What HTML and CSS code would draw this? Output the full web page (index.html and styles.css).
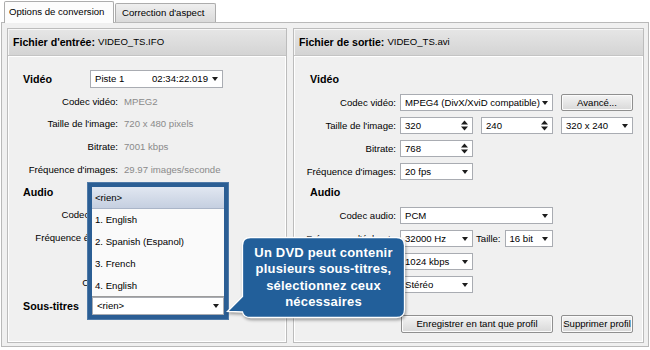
FILE: index.html
```html
<!doctype html>
<html lang="fr">
<head>
    <meta charset="UTF-8">
    <title>Options de conversion</title>
    <link rel="stylesheet" href="styles.css">
</head>
<body>
<div class="tabs">
    <div class="tab active">Options de conversion</div>
    <div class="tab">Correction d'aspect</div>
</div>
<div class="page">
    <div class="panel panel-in">
        <div class="panel-head"><b>Fichier d'entrée:</b> VIDEO_TS.IFO</div>
        <div class="panel-body in-body">
            <div class="srow">
                <span class="sec">Vidéo</span>
                <div class="combo piste w133"><span>Piste 1</span><span class="time">02:34:22.019</span></div>
            </div>
            <div class="irow"><span class="lbl">Codec vidéo:</span><span class="val">MPEG2</span></div>
            <div class="irow"><span class="lbl">Taille de l'image:</span><span class="val">720 x 480 pixels</span></div>
            <div class="irow"><span class="lbl">Bitrate:</span><span class="val">7001 kbps</span></div>
            <div class="irow"><span class="lbl">Fréquence d'images:</span><span class="val">29.97 images/seconde</span></div>
            <div class="irow"><span class="sec">Audio</span></div>
            <div class="irow"><span class="lbl">Codec audio:</span></div>
            <div class="irow"><span class="lbl">Fréquence échant.:</span></div>
            <div class="irow"><span class="lbl">Bitrate:</span></div>
            <div class="irow"><span class="lbl">Canaux:</span></div>
            <div class="srow sub">
                <span class="sec">Sous-titres</span>
                <div class="drop">
                    <div class="combo w132">&lt;rien&gt;</div>
                    <div class="popup">
                        <ul class="list">
                            <li class="sel">&lt;rien&gt;</li>
                            <li>1. English</li>
                            <li>2. Spanish (Espanol)</li>
                            <li>3. French</li>
                            <li>4. English</li>
                        </ul>
                    </div>
                </div>
            </div>
        </div>
    </div>

    <div class="panel panel-out">
        <div class="panel-head"><b>Fichier de sortie:</b> VIDEO_TS.avi</div>
        <div class="panel-body out-body">
            <div class="osec">Vidéo</div>
            <div class="orow first">
                <span class="lbl">Codec vidéo:</span>
                <div class="combo w153">MPEG4 (DivX/XviD compatible)</div>
                <div class="btn w72 ml8">Avancé...</div>
            </div>
            <div class="orow">
                <span class="lbl">Taille de l'image:</span>
                <div class="combo spin w73">320<svg width="7" height="11" viewBox="0 0 7 11"><path d="M0 4.5L3.5 0.5 7 4.5z M0 6.5L3.5 10.5 7 6.5z"/></svg></div>
                <div class="combo spin w72 ml8">240<svg width="7" height="11" viewBox="0 0 7 11"><path d="M0 4.5L3.5 0.5 7 4.5z M0 6.5L3.5 10.5 7 6.5z"/></svg></div>
                <div class="combo w72 ml8">320 x 240</div>
            </div>
            <div class="orow">
                <span class="lbl">Bitrate:</span>
                <div class="combo spin w73">768<svg width="7" height="11" viewBox="0 0 7 11"><path d="M0 4.5L3.5 0.5 7 4.5z M0 6.5L3.5 10.5 7 6.5z"/></svg></div>
            </div>
            <div class="orow">
                <span class="lbl">Fréquence d'images:</span>
                <div class="combo w73">20 fps</div>
            </div>
            <div class="osec audio">Audio</div>
            <div class="orow">
                <span class="lbl">Codec audio:</span>
                <div class="combo w153">PCM</div>
            </div>
            <div class="orow">
                <span class="lbl">Fréquence d'échant.:</span>
                <div class="combo w73">32000 Hz</div>
                <span class="small-lbl">Taille:</span>
                <div class="combo w48">16 bit</div>
            </div>
            <div class="orow">
                <span class="lbl"></span>
                <div class="combo w73">1024 kbps</div>
            </div>
            <div class="orow">
                <span class="lbl"></span>
                <div class="combo w73">Stéréo</div>
            </div>
            <div class="brow">
                <div class="btn w152">Enregistrer en tant que profil</div>
                <div class="btn w72 ml8">Supprimer profil</div>
            </div>
        </div>
    </div>
</div>

<div class="callout">
    <svg class="bubble" width="182" height="86" viewBox="0 0 182 86">
        <path d="M24.5 2.5H170.5Q178.5 2.5 178.5 10.5V74.5Q178.5 82.5 170.5 82.5H25Q17.5 82.5 16.5 77L1.5 76.5 16.5 61.5V10.5Q16.5 2.5 24.5 2.5Z"/>
    </svg>
    <div class="callout-text">Un DVD peut contenir<br>plusieurs sous-titres,<br>sélectionnez ceux<br>nécessaires</div>
</div>
</body>
</html>
```

FILE: styles.css
```css
* {
    margin: 0;
    padding: 0;
    box-sizing: border-box;
}

ul {
    list-style: none;
}

body {
    position: relative;
    width: 650px;
    height: 350px;
    overflow: hidden;
    background: #fff;
    font: 9.6px/1.2 "Liberation Sans", Arial, sans-serif;
    color: #000;
}

b {
    font-size: 10.6px;
}

/* tabs */

.tabs {
    display: flex;
    align-items: flex-end;
    height: 22px;
    padding-left: 4px;
}

.tab {
    width: 101px;
    height: 19px;
    margin-left: 1px;
    padding-left: 6px;
    display: flex;
    align-items: center;
    border: 1px solid #acacac;
    border-bottom: none;
    border-radius: 2px 2px 0 0;
    background: linear-gradient(#efefef, #dadada);
}

.tab.active {
    width: 110px;
    height: 22px;
    margin-left: 0;
    margin-bottom: -1px;
    padding-left: 4px;
    padding-bottom: 2px;
    position: relative;
    z-index: 1;
    background: #fcfcfc;
}

.page {
    width: 648px;
    height: 325px;
    margin-left: 1px;
    padding: 5px 0 0 5px;
    display: flex;
    gap: 6px;
    border: 1px solid #b9b9b9;
    background: #f0f0f0;
}

/* panels */

.panel {
    height: 315px;
    display: flex;
    flex-direction: column;
    border: 1px solid #bcbcbc;
    background: #f0f0f0;
    box-shadow: inset 0 0 0 1px #fff;
}

.panel-in {
    width: 280px;
}

.panel-out {
    width: 351px;
}

.panel-head {
    height: 27px;
    padding-left: 5px;
    display: flex;
    align-items: center;
    gap: 3px;
    border-bottom: 1px solid #c4c4c4;
    background: linear-gradient(#e6e6e6, #d4d4d4);
    box-shadow: inset 1px 1px 0 #f7f7f7;
}

.panel-body {
    flex: 1;
    box-shadow: inset 1px 1px 0 #fff;
}

.sec,
.osec {
    font-weight: bold;
    font-size: 10.7px;
}

/* input file panel */

.in-body {
    padding: 14px 0 0 15px;
}

.srow {
    height: 18px;
    display: flex;
    align-items: center;
    margin-bottom: 2px;
}

.srow .sec {
    width: 67px;
}

.srow.sub {
    margin-top: 3px;
}

.srow.sub .sec {
    width: 69px;
}

.irow {
    height: 22.7px;
    display: flex;
    align-items: center;
}

.irow .lbl {
    width: 95px;
    text-align: right;
}

.irow .val {
    margin-left: 6px;
    color: #8a8a8a;
}

.combo {
    height: 100%;
    padding: 0 4px;
    display: flex;
    align-items: center;
    white-space: nowrap;
    border: 1px solid #a9acb2;
    background: #fff;
}

.combo::after {
    content: "";
    margin-left: auto;
    border-top: 4px solid #1c1c1c;
    border-left: 3.5px solid transparent;
    border-right: 3.5px solid transparent;
}

.combo.spin::after {
    display: none;
}

.combo.spin svg {
    margin-left: auto;
    fill: #1c1c1c;
}

.piste .time {
    margin-left: auto;
}

.combo.piste::after {
    margin-left: 4px;
}

.w48 { width: 48px; }
.w72 { width: 72px; }
.w73 { width: 73px; }
.w132 { width: 132px; }
.w133 { width: 133px; }
.w152 { width: 152px; }
.w153 { width: 153px; }
.ml8 { margin-left: 8px; }

/* subtitle drop-down */

.drop {
    position: relative;
    height: 18px;
}

.popup {
    position: absolute;
    left: -4px;
    right: -4px;
    bottom: -4px;
    height: 136px;
    border: 4px solid #2b5e94;
    box-shadow: 0 0 0 1px #4f7aa8;
}

.list {
    height: 110px;
    background: #fafafa;
    border-bottom: 1px solid #9c9c9c;
}

.list li {
    height: 22px;
    padding-left: 3px;
    display: flex;
    align-items: center;
}

.list li.sel {
    background: linear-gradient(#e1e7f1, #c5cfe0);
    border-bottom: 1px solid #aab5c8;
}

/* output file panel */

.out-body {
    padding: 14px 0 0 6px;
}

.osec {
    height: 18px;
    padding-left: 10px;
    display: flex;
    align-items: center;
}

.osec.audio {
    margin-top: 3px;
}

.orow {
    height: 17px;
    margin-top: 6px;
    display: flex;
    align-items: center;
}

.orow .lbl {
    width: 96px;
    margin-right: 4px;
    text-align: right;
    white-space: nowrap;
}

.small-lbl {
    margin: 0 4px 0 3px;
}

.btn {
    height: 100%;
    display: flex;
    align-items: center;
    justify-content: center;
    white-space: nowrap;
    border: 1px solid #8f8f8f;
    border-radius: 2px;
    background: linear-gradient(#f4f4f4, #e6e6e6 50%, #d8d8d8);
    box-shadow: inset 0 0 0 1px #fbfbfb;
}

.brow {
    height: 18px;
    margin-top: 22px;
    padding-left: 101px;
    display: flex;
}

/* tooltip */

.callout {
    position: absolute;
    left: 226px;
    top: 235px;
    width: 182px;
    height: 86px;
    z-index: 5;
}

.bubble {
    display: block;
    fill: #225f9a;
    stroke: #fff;
    stroke-width: 1.3;
    filter: drop-shadow(1px 2px 1.5px rgba(0, 0, 0, .35));
}

.callout-text {
    position: absolute;
    left: 16px;
    top: 10px;
    width: 163px;
    text-align: center;
    color: #fff;
    font-weight: bold;
    font-size: 13px;
    line-height: 16.3px;
    letter-spacing: .2px;
}
```
